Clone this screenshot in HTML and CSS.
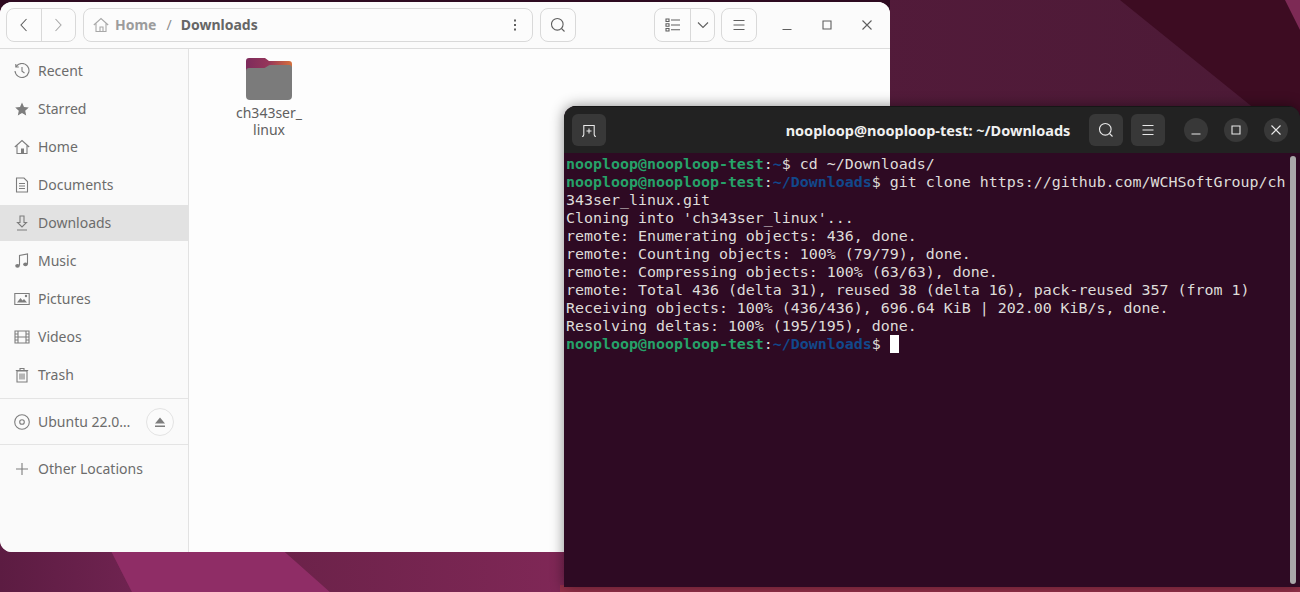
FILE: index.html
```html
<!DOCTYPE html>
<html lang="en">
<head>
<meta charset="utf-8">
<title>Desktop</title>
<link rel="stylesheet" href="styles.css">
</head>
<body>
<div class="desktop">
  <svg class="wallpaper" viewBox="0 0 1300 592" width="1300" height="592" aria-hidden="true">
    <defs>
      <linearGradient id="wgA" x1="0" y1="0" x2="1" y2="0"><stop offset="0" stop-color="#5f1c42"/><stop offset="1" stop-color="#4c1a36"/></linearGradient>
      <linearGradient id="wgB" x1="0" y1="0" x2="1" y2="0"><stop offset="0" stop-color="#6b2249"/><stop offset="1" stop-color="#822858"/></linearGradient>
      <linearGradient id="wgC" x1="0" y1="0" x2="1" y2="0"><stop offset="0" stop-color="#5c1c42"/><stop offset="1" stop-color="#6f2350"/></linearGradient>
    </defs>
    <rect width="1300" height="592" fill="url(#wgA)"/>
    <polygon points="1120,0 1300,0 1300,150 1250,105" fill="#3d0c22"/>
    <polygon points="1285,0 1300,0 1300,30" fill="#7d2a55"/>
    <rect y="0" width="890" height="10" fill="#2d0a20"/>
    <rect y="545" width="1300" height="47" fill="#7a2655"/>
    <polygon points="0,545 108,545 132,592 0,592" fill="url(#wgC)"/>
    <polygon points="108,545 277,545 330,592 132,592" fill="#8f2d66"/>
    <polygon points="277,545 600,545 600,592 330,592" fill="url(#wgB)"/>
    <rect x="560" y="585" width="740" height="7" fill="#96304a"/>
  </svg>

  <section class="window files">
    <header class="files-bar">
      <div class="group nav-group">
        <button class="seg seg-nav"><svg class="ic" viewBox="0 0 16 16"><path d="M10.500 2 5 8l5.500 6" class="st dark"/></svg></button>
        <button class="seg seg-nav"><svg class="ic" viewBox="0 0 16 16"><path d="M5.500 2 11 8l-5.500 6" class="st faint"/></svg></button>
      </div>
      <div class="group path-group">
        <div class="crumbs">
          <svg class="ic crumb-home" viewBox="0 0 16 16"><path d="M.8 8 8 1.500 15.200 8M3 6.500V14.500H13V6.500M7 14.500V10H10V14.500" class="st faint"/></svg>
          <span class="crumb-dim">Home</span>
          <span class="crumb-sep">/</span>
          <span class="crumb-cur">Downloads</span>
        </div>
        <button class="seg seg-more"><svg class="ic" viewBox="0 0 16 16"><path d="M8 2.500v2M8 7v2M8 11.500v2" class="st dark wide"/></svg></button>
      </div>
      <button class="group tool"><svg class="ic" viewBox="0 0 16 16"><circle cx="7.300" cy="7.300" r="5.800" class="st dark"/><path d="m11.500 11.500 3 3" class="st dark"/></svg></button>
      <div class="spacer"></div>
      <div class="group view-group">
        <button class="seg seg-list"><svg class="ic" viewBox="0 0 16 16"><path d="M1 2h3v2.500H1zM1 6.800h3v2.500H1zM1 11.500h3V14H1zM6 3h9M6 8h9M6 12.800h9" class="st dark"/></svg></button>
        <button class="seg seg-arrow"><svg class="ic small" viewBox="0 0 12 12"><path d="m1 3.500 5 5 5-5" class="st dark"/></svg></button>
      </div>
      <button class="group tool menu-tool"><svg class="ic" viewBox="0 0 16 16"><path d="M2.500 3.500h11M2.500 8h11M2.500 12.500h11" class="st dark"/></svg></button>
      <div class="win-btns">
        <button class="win"><svg class="ic" viewBox="0 0 16 16"><path d="M3.500 12.500h9" class="st dark"/></svg></button>
        <button class="win"><svg class="ic" viewBox="0 0 16 16"><path d="M4 4h8v8H4z" class="st dark"/></svg></button>
        <button class="win"><svg class="ic" viewBox="0 0 16 16"><path d="m3.500 3.500 9 9m0-9-9 9" class="st dark"/></svg></button>
      </div>
    </header>
    <div class="files-body">
      <nav class="sidebar">
        <ul class="places">
          <li class="place"><svg class="ic" viewBox="0 0 16 16"><path d="M2.200 3.500A7 7 0 1 1 1 8M1.800 1v3h3M8 4v4.300l2.500 1.700" class="st"/></svg><span class="lbl">Recent</span></li>
          <li class="place"><svg class="ic" viewBox="0 0 16 16"><path d="m8 1.500 2 4.500 4.800.5-3.600 3.200 1 4.800L8 12.100l-4.200 2.400 1-4.800L1.200 6.500 6 6z" class="fl"/></svg><span class="lbl">Starred</span></li>
          <li class="place"><svg class="ic" viewBox="0 0 16 16"><path d="M.8 8 8 1.500 15.200 8M3 6.500V14.500H13V6.500" class="st"/><path d="M7 9.500h3v5H7z" class="fl"/></svg><span class="lbl">Home</span></li>
          <li class="place"><svg class="ic" viewBox="0 0 16 16"><path d="M2.500 1h7.500l3.500 3.500V15h-11zM5 6.500h6M5 9h6M5 11.500h6" class="st"/></svg><span class="lbl">Documents</span></li>
          <li class="place is-current"><svg class="ic" viewBox="0 0 16 16"><path d="M6 1h4v6.500h2.500L8 12 3.500 7.500H6zM3 15h10" class="st"/></svg><span class="lbl">Downloads</span></li>
          <li class="place"><svg class="ic" viewBox="0 0 16 16"><path d="M5.500 12.500V2.500l8-1.500v10" class="st"/><ellipse cx="3.500" cy="12.800" rx="2.300" ry="1.900" class="fl"/><ellipse cx="11.500" cy="11.300" rx="2.300" ry="1.900" class="fl"/></svg><span class="lbl">Music</span></li>
          <li class="place"><svg class="ic" viewBox="0 0 16 16"><path d="M.8 2.500h14.400v11H.8z" class="st"/><path d="m3 11.500 3.500-4.500 2 2.500 1.500-1.500 3 3.500z" class="fl"/><circle cx="12" cy="5" r="1.200" class="fl"/></svg><span class="lbl">Pictures</span></li>
          <li class="place"><svg class="ic" viewBox="0 0 16 16"><path d="M1 2h14v12H1zM4 2v12M12 2v12M4 8h8M1 5h3M1 8h3M1 11h3M12 5h3M12 8h3M12 11h3" class="st"/></svg><span class="lbl">Videos</span></li>
          <li class="place"><svg class="ic" viewBox="0 0 16 16"><path d="M3 4h10v11H3zM1.800 3.500h12.400M6 3.500V1.500h4v2M6 6.500v6M8 6.500v6M10 6.500v6" class="st"/></svg><span class="lbl">Trash</span></li>
        </ul>
        <div class="device">
          <svg class="ic" viewBox="0 0 16 16"><circle cx="8" cy="8" r="7.300" class="st"/><circle cx="8" cy="8" r="2.300" class="st"/></svg>
          <span class="device-name">Ubuntu 22.0…</span>
          <button class="eject"><svg class="ic small" viewBox="0 0 12 12"><path d="M6 1.500 11 7.500H1zM1 9.500h10v1.500H1z" class="fl"/></svg></button>
        </div>
        <div class="place other"><svg class="ic" viewBox="0 0 16 16"><path d="M8 2v12M2 8h12" class="st"/></svg><span>Other Locations</span></div>
      </nav>
      <main class="grid">
        <div class="file">
          <svg class="folder" viewBox="0 0 46 42">
            <defs><linearGradient id="ftab" x1="0" y1="0" x2="1" y2="0"><stop offset="0" stop-color="#7d2b5c"/><stop offset=".5" stop-color="#96365a"/><stop offset="1" stop-color="#d6703c"/></linearGradient></defs>
            <path d="M3 0h16l4 3h20a3 3 0 0 1 3 3v12H0V3a3 3 0 0 1 3-3z" fill="url(#ftab)"/>
            <path d="M0 13a3 3 0 0 1 3-3h14c2 0 3-.6 4-1.500S23 7 25 7h18a3 3 0 0 1 3 3v28a4 4 0 0 1-4 4H4a4 4 0 0 1-4-4z" fill="#7b7b7b"/>
          </svg>
          <span class="file-name">ch343ser_<br>linux</span>
        </div>
      </main>
    </div>
  </section>

  <section class="window term">
    <header class="term-bar">
      <button class="t-btn"><svg class="ic" viewBox="0 0 16 16"><path d="M1 14.500c1.500 0 1.800-.8 1.800-2V3.500h10.400v9c0 1.200.3 2 1.800 2" class="st light"/><path d="M8 6.500v5M5.500 9h5" class="st light"/></svg></button>
      <h1 class="term-title">nooploop@nooploop-test: ~/Downloads</h1>
      <button class="t-btn"><svg class="ic" viewBox="0 0 16 16"><circle cx="7.300" cy="7.300" r="5.800" class="st light"/><path d="m11.500 11.500 3 3" class="st light"/></svg></button>
      <button class="t-btn"><svg class="ic" viewBox="0 0 16 16"><path d="M2.500 3.500h11M2.500 8h11M2.500 12.500h11" class="st light"/></svg></button>
      <div class="t-wins">
        <button class="t-win"><svg class="ic small" viewBox="0 0 12 12"><path d="M1.500 10h9" class="st light"/></svg></button>
        <button class="t-win"><svg class="ic small" viewBox="0 0 12 12"><path d="M2 2h8v8H2z" class="st light"/></svg></button>
        <button class="t-win"><svg class="ic small" viewBox="0 0 12 12"><path d="m1.500 1.500 9 9m0-9-9 9" class="st light"/></svg></button>
      </div>
    </header>
    <div class="term-body">
      <div class="screen">
        <div class="ln"><b class="g">nooploop@nooploop-test</b>:<b class="b">~</b>$ cd ~/Downloads/</div>
        <div class="ln"><b class="g">nooploop@nooploop-test</b>:<b class="b">~/Downloads</b>$ git clone https://github.com/WCHSoftGroup/ch</div>
        <div class="ln">343ser_linux.git</div>
        <div class="ln">Cloning into 'ch343ser_linux'...</div>
        <div class="ln">remote: Enumerating objects: 436, done.</div>
        <div class="ln">remote: Counting objects: 100% (79/79), done.</div>
        <div class="ln">remote: Compressing objects: 100% (63/63), done.</div>
        <div class="ln">remote: Total 436 (delta 31), reused 38 (delta 16), pack-reused 357 (from 1)</div>
        <div class="ln">Receiving objects: 100% (436/436), 696.64 KiB | 202.00 KiB/s, done.</div>
        <div class="ln">Resolving deltas: 100% (195/195), done.</div>
        <div class="ln"><b class="g">nooploop@nooploop-test</b>:<b class="b">~/Downloads</b>$ <span class="cursor"></span></div>
      </div>
      <div class="scrollbar"></div>
    </div>
  </section>
</div>
</body>
</html>
```
FILE: styles.css
```css
* { box-sizing: border-box; }
html, body { margin: 0; padding: 0; height: 100%; overflow: hidden; }
body { font-family: "Noto Sans", "Liberation Sans", sans-serif; }
button { font: inherit; padding: 0; margin: 0; background: none; border: 0; display: flex; align-items: center; justify-content: center; }
ul { list-style: none; margin: 0; padding: 0; }

.desktop { position: relative; width: 1300px; height: 592px; overflow: hidden; }
.wallpaper { position: absolute; inset: 0; display: block; }
.window { position: absolute; display: flex; flex-direction: column; overflow: hidden; }

.ic { width: 16px; height: 16px; display: block; flex: none; }
.ic.small { width: 12px; height: 12px; }
.st { fill: none; stroke: #7d7d7d; stroke-width: 1.100; }
.fl { fill: #7d7d7d; }
.st.dark { stroke: #5f5f5f; }
.st.faint { stroke: #a8a8a8; }
.st.wide { stroke-width: 2; }
.st.light { stroke: #e8e8e8; }

/* Files */
.files { left: 0; top: 2px; width: 890px; height: 550px; border-radius: 12px 12px 0 12px; background: #fdfdfd; }
.files-bar { height: 47px; flex: none; display: flex; align-items: center; gap: 7px; padding: 0 0 0 6px; background: #fbfbfb; border-bottom: 1px solid #dcdcdc; }
.group { height: 34px; border: 1px solid #d9d9d9; border-radius: 8px; background: #fcfcfc; display: flex; }
.seg { height: 100%; }
.seg + .seg { border-left: 1px solid #d9d9d9; }
.nav-group { width: 70px; }
.seg-nav { flex: 1; }
.path-group { width: 450px; }
.crumbs { flex: 1; display: flex; align-items: center; padding-left: 9px; font-size: 14px; font-weight: 700; padding-bottom: 2px; }
.crumb-home { margin-right: 6px; margin-top: 2px; }
.crumb-dim { color: #9c9c9c; }
.crumb-sep { color: #8c8c8c; font-weight: 400; margin: 0 9px 0 10px; }
.crumb-cur { color: #666; }
.seg-more { width: 35px; }
.tool { width: 36px; align-items: center; justify-content: center; }
.spacer { flex: 1; }
.view-group { width: 61px; }
.seg-list { width: 35px; }
.seg-arrow { flex: 1; }
.menu-tool { margin-left: -1px; }
.win-btns { display: flex; width: 133px; padding-left: 10px; margin-left: -7px; }
.win { width: 40px; height: 34px; }

.files-body { flex: 1; display: flex; min-height: 0; }
.sidebar { width: 189px; flex: none; background: #fafafa; border-right: 1px solid #e2e2e2; padding-top: 4px; color: #6c6c6c; font-size: 14px; }
.places { display: flex; flex-direction: column; gap: 2px; }
.place { height: 36px; display: flex; align-items: center; gap: 8px; padding-left: 14px; }
.lbl { padding-bottom: 2px; }
.place.is-current { background: #e2e2e2; }
.device { margin-top: 5px; height: 47px; display: flex; align-items: center; gap: 8px; padding: 0 14px; border-top: 1px solid #e4e4e4; border-bottom: 1px solid #e4e4e4; }
.device-name { flex: 1; white-space: nowrap; }
.eject { width: 28px; height: 28px; border: 1px solid #e3e3e3; border-radius: 50%; background: #fbfbfb; }
.other { height: 47px; }
.grid { flex: 1; padding-top: 9px; padding-left: 36px; }
.file { width: 88px; display: flex; flex-direction: column; align-items: center; color: #606060; font-size: 14px; line-height: 17px; text-align: center; }
.folder { width: 46px; height: 42px; display: block; margin-bottom: 4px; }

/* Terminal */
.term { left: 564px; top: 106px; width: 736px; height: 481px; border-radius: 12px 12px 0 0; background: #2e0a23; box-shadow: 0 0 14px rgba(0,0,0,.45); }
.term-bar { height: 47px; flex: none; display: flex; align-items: center; padding: 0 12px 0 8px; gap: 8px; background: #222222; border-top: 1px solid #161616; }
.t-btn { width: 34px; height: 32px; border-radius: 6px; background: #383838; flex: none; }
.term-title { flex: 1; margin: 0; text-align: center; color: #f0f0f0; font-size: 14.500px; font-weight: 700; padding-left: 161px; white-space: nowrap; }
.t-wins { display: flex; gap: 16px; margin-left: 11px; }
.t-win { width: 24px; height: 24px; border-radius: 50%; background: #383838; }
.term-body { flex: 1; position: relative; padding: 2px 0 0 2px; }
.screen { font-family: "DejaVu Sans Mono", "Liberation Mono", monospace; font-size: 14.950px; line-height: 18px; color: #dedcd9; }
.ln { height: 18px; white-space: pre; }
.g { color: #26a269; font-weight: 700; }
.b { color: #12488b; font-weight: 700; }
.cursor { display: inline-block; width: 9px; height: 18px; background: #fff; vertical-align: top; }
.scrollbar { position: absolute; top: 3px; bottom: 3px; right: 4px; width: 6px; border-radius: 3px; background: #a9a8a9; }
```
